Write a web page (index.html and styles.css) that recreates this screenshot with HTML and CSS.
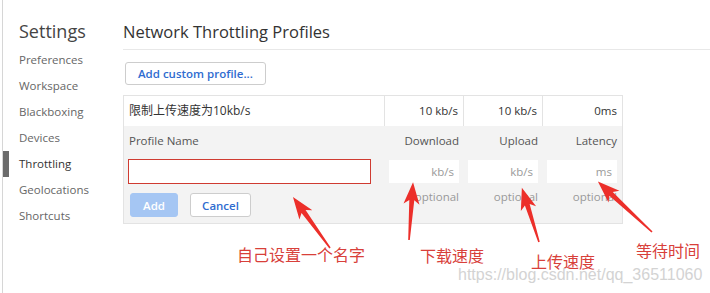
FILE: index.html
```html
<!DOCTYPE html>
<html lang="zh-CN">
<head>
    <meta charset="UTF-8">
    <title>Settings - Throttling</title>
    <link rel="stylesheet" href="styles.css">
</head>
<body>
    <div class="page">
        <aside class="sidebar">
            <h1 class="sidebar-title">Settings</h1>
            <ul class="nav">
                <li>Preferences</li>
                <li>Workspace</li>
                <li>Blackboxing</li>
                <li>Devices</li>
                <li class="selected">Throttling</li>
                <li>Geolocations</li>
                <li>Shortcuts</li>
            </ul>
        </aside>

        <main class="content">
            <h2 class="content-title">Network Throttling Profiles</h2>
            <div class="toolbar">
                <button class="btn btn-text">Add custom profile...</button>
            </div>

            <div class="profiles">
                <div class="profile-row">
                    <div class="cell cell-name">限制上传速度为10kb/s</div>
                    <div class="cell">10 kb/s</div>
                    <div class="cell">10 kb/s</div>
                    <div class="cell">0ms</div>
                </div>
                <div class="editor">
                    <div class="label label-name">Profile Name</div>
                    <div class="label">Download</div>
                    <div class="label">Upload</div>
                    <div class="label">Latency</div>

                    <input class="field field-name" type="text">
                    <input class="field" type="text" placeholder="kb/s">
                    <input class="field" type="text" placeholder="kb/s">
                    <input class="field" type="text" placeholder="ms">

                    <div class="editor-buttons">
                        <button class="btn btn-primary">Add</button>
                        <button class="btn btn-text">Cancel</button>
                    </div>
                    <div class="hint">optional</div>
                    <div class="hint">optional</div>
                    <div class="hint">optional</div>
                </div>
            </div>
        </main>

        <!-- screenshot annotations -->
        <div class="notes">
            <svg class="arrows" width="710" height="293" viewBox="0 0 710 293">
                <g transform="translate(330 248) rotate(-36)">
                    <polygon points="0,-63 8,-41 2.5,-45 0.8,0 -0.8,0 -2.5,-45 -8,-41"/>
                </g>
                <g transform="translate(409 240) rotate(4)">
                    <polygon points="0,-58 8,-36 2.5,-40 0.8,0 -0.8,0 -2.5,-40 -8,-36"/>
                </g>
                <g transform="translate(539 242) rotate(-17.5)">
                    <polygon points="0,-57 8,-35 2.5,-39 0.8,0 -0.8,0 -2.5,-39 -8,-35"/>
                </g>
                <g transform="translate(652 232) rotate(-47)">
                    <polygon points="0,-74 8,-52 2.5,-56 0.8,0 -0.8,0 -2.5,-56 -8,-52"/>
                </g>
            </svg>
            <span class="note note-name">自己设置一个名字</span>
            <span class="note note-down">下载速度</span>
            <span class="note note-up">上传速度</span>
            <span class="note note-wait">等待时间</span>
            <span class="watermark">https://blog.csdn.net/qq_36511060</span>
        </div>
    </div>
</body>
</html>
```

FILE: styles.css
```css
body {
    margin: 0;
    background-color: #ffffff;
    font-family: 'Open Sans', 'Noto Sans CJK SC', sans-serif;
    color: #333;
}
.page {
    position: relative;
    display: flex;
    width: 710px;
    height: 293px;
    overflow: hidden;
}
.sidebar {
    width: 120px;
    margin-left: 2px;
    border-left: 1px solid #d6d6d6;
    flex-shrink: 0;
}
.sidebar-title {
    margin: 0;
    height: 47px;
    padding: 19px 0 0 16px;
    box-sizing: border-box;
    font-size: 18px;
    font-weight: normal;
    line-height: 24px;
    color: #444;
}
.nav {
    list-style: none;
    margin: 0;
    padding: 0;
}
.nav li {
    position: relative;
    height: 26px;
    line-height: 26px;
    padding-left: 16px;
    font-size: 11.5px;
    color: #666;
}
.nav li.selected {
    color: #333;
}
.nav li.selected::before {
    content: '';
    position: absolute;
    left: 0;
    top: 0;
    width: 6px;
    height: 100%;
    background-color: #6b6b6b;
}
.content {
    flex: 1;
}
.content-title {
    margin: 0;
    padding: 20px 0 0 0;
    height: 50px;
    box-sizing: border-box;
    border-bottom: 1px solid #e8e8e8;
    font-size: 16.5px;
    font-weight: normal;
    line-height: 24px;
    color: #333;
}
.toolbar {
    padding: 11px 0 0 2px;
    height: 45px;
    box-sizing: border-box;
}
.btn {
    font-family: inherit;
    font-size: 11.5px;
    height: 23px;
    border-radius: 3px;
    padding: 0 12px;
    cursor: pointer;
}
.btn-text {
    background-color: #fff;
    border: 1px solid #cdcdcd;
    color: #2f6cd0;
    font-weight: 600;
}
.btn-primary {
    background-color: #a5c6f3;
    border: 1px solid #a5c6f3;
    color: #fff;
    font-weight: 600;
    width: 48px;
    padding: 0;
}
.profiles {
    width: 500px;
    border: 1px solid #e3e3e3;
    box-sizing: border-box;
}
.profile-row {
    display: grid;
    grid-template-columns: 260px 79px 79px 1fr;
    height: 30px;
    background-color: #fff;
    font-size: 11.5px;
}
.cell {
    line-height: 30px;
    text-align: right;
    padding-right: 5px;
    border-left: 1px solid #e3e3e3;
}
.cell-name {
    text-align: left;
    padding-left: 5px;
    border-left: none;
    font-size: 12px;
}
.editor {
    display: grid;
    grid-template-columns: 252px 79px 79px 79px;
    padding: 4px 0 6px 4px;
    background-color: #f3f3f3;
    font-size: 11.5px;
}
.label {
    line-height: 22px;
    text-align: right;
    color: #555;
}
.label-name {
    text-align: left;
    padding-left: 1px;
}
.field {
    justify-self: end;
    width: 70px;
    height: 23px;
    margin-top: 8px;
    border: none;
    background-color: #fff;
    box-sizing: border-box;
    padding: 0 5px;
    text-align: right;
    font-family: inherit;
    font-size: 11.5px;
}
.field::placeholder {
    color: #9a9a9a;
}
.field-name {
    justify-self: start;
    width: 243px;
    height: 25px;
    margin-top: 7px;
    border: 1px solid #cf3b31;
}
.editor-buttons {
    display: flex;
    gap: 12px;
    padding: 9px 0 0 2px;
}
.editor-buttons .btn {
    height: 24px;
}
.editor-buttons .btn-text {
    width: 61px;
    padding: 0;
}
.hint {
    text-align: right;
    line-height: 18px;
    margin-top: 4px;
    color: #999;
}
.notes {
    position: absolute;
    left: 0;
    top: 0;
    width: 710px;
    height: 293px;
    pointer-events: none;
}
.arrows {
    position: absolute;
    left: 0;
    top: 0;
}
.arrows polygon {
    fill: #ec2f2a;
}
.note {
    position: absolute;
    font-family: 'Noto Sans CJK SC', sans-serif;
    font-size: 16px;
    line-height: 18px;
    color: #d8403a;
}
.note-name { left: 237px; top: 245px; }
.note-down { left: 420px; top: 246px; }
.note-up { left: 531px; top: 252px; }
.note-wait { left: 636px; top: 241px; }
.watermark {
    position: absolute;
    left: 458px;
    top: 266px;
    font-family: 'Liberation Sans', sans-serif;
    font-size: 16px;
    line-height: 18px;
    color: #d3d3d3;
    text-shadow: 0 0 1px #fff;
}
```
